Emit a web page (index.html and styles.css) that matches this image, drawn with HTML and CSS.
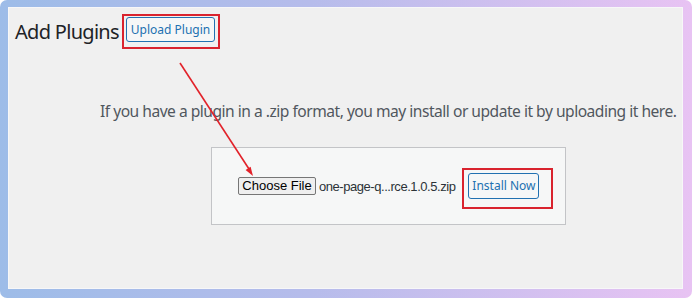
FILE: index.html
```html
<!DOCTYPE html>
<html lang="en">
  <head>
    <meta charset="UTF-8" />
    <title>Add Plugins</title>
    <link rel="stylesheet" href="styles.css">
  </head>
  <body>
    <div class="frame">
      <div class="screen">
        <div class="page-head">
          <h1>Add Plugins</h1>
          <span class="mark mark-upload"><a class="btn">Upload Plugin</a></span>
        </div>
        <p class="help">If you have a plugin in a .zip format, you may install or update it by uploading it here.</p>
        <div class="upload-box">
          <span class="file-btn">Choose File</span>
          <span class="file-name">one-page-q...rce.1.0.5.zip</span>
          <span class="mark mark-install"><button class="btn">Install Now</button></span>
        </div>
      </div>
      <svg class="arrow" width="692" height="298" viewBox="0 0 692 298">
        <line x1="180" y1="63" x2="249" y2="169" stroke="#e2222a" stroke-width="1.6" />
        <polygon points="253,176 245.6,170 250.6,166.8" fill="#e2222a" />
      </svg>
    </div>
  </body>
</html>
```

FILE: styles.css
```css
body {
  margin: 0;
  background: #ffffff;
  font-family: "Noto Sans", "Open Sans", sans-serif;
}

.frame {
  position: relative;
  width: 692px;
  height: 298px;
  box-sizing: border-box;
  padding: 7px 9px 9px 8px;
  border-radius: 7px;
  background: linear-gradient(to right, #9dbce8, #b6bceb 45%, #e8c3f3);
}

.screen {
  height: 100%;
  box-sizing: border-box;
  background-color: #f0f0f0;
  border: 1px solid #f7f7f8;
}

.page-head {
  display: flex;
  align-items: flex-start;
  padding: 6px 0 0 6px;
}

h1 {
  width: 102px;
  margin: 4px 5px 0 0;
  font-size: 20px;
  font-weight: 400;
  line-height: 28px;
  letter-spacing: -0.7px;
  white-space: nowrap;
  color: #1d2327;
}

.mark {
  display: inline-block;
  flex-shrink: 0;
  border: 2px solid #d9232e;
}

.mark-upload {
  padding: 1px 3px 5px 2px;
}

.mark-install {
  padding: 3px 12px 8px 4px;
  margin-top: 5px;
}

.btn {
  display: inline-block;
  box-sizing: border-box;
  font-family: "Noto Sans", "Open Sans", sans-serif;
  font-size: 12px;
  color: #2271b1;
  background-color: #f6f7f7;
  border: 1px solid #2271b1;
  border-radius: 3px;
  text-align: center;
  white-space: nowrap;
  padding: 0;
  cursor: pointer;
}

.mark-upload .btn {
  width: 89px;
  height: 25px;
  line-height: 23px;
}

.mark-install .btn {
  width: 71px;
  height: 26px;
  line-height: 24px;
}

.help {
  margin: 50px 0 0 91px;
  font-size: 15.6px;
  line-height: 24px;
  letter-spacing: -0.5px;
  white-space: nowrap;
  color: #50575e;
}

.upload-box {
  display: flex;
  align-items: center;
  width: 355px;
  height: 78px;
  box-sizing: border-box;
  margin: 24px 0 0 202px;
  padding-left: 26px;
  background-color: #f6f7f7;
  border: 1px solid #c3c4c7;
}

.file-btn {
  flex-shrink: 0;
  box-sizing: border-box;
  width: 78px;
  height: 18px;
  line-height: 16px;
  font-family: "Liberation Sans", Arial, sans-serif;
  font-size: 13px;
  text-align: center;
  white-space: nowrap;
  color: #000000;
  background-color: #efefef;
  border: 1px solid #767676;
  border-radius: 2px;
}

.file-name {
  flex-shrink: 0;
  margin: 0 7px 0 3px;
  font-family: "Liberation Sans", Arial, sans-serif;
  font-size: 13px;
  letter-spacing: -0.45px;
  white-space: nowrap;
  color: #2c3338;
}

.arrow {
  position: absolute;
  top: 0;
  left: 0;
  pointer-events: none;
}
```
